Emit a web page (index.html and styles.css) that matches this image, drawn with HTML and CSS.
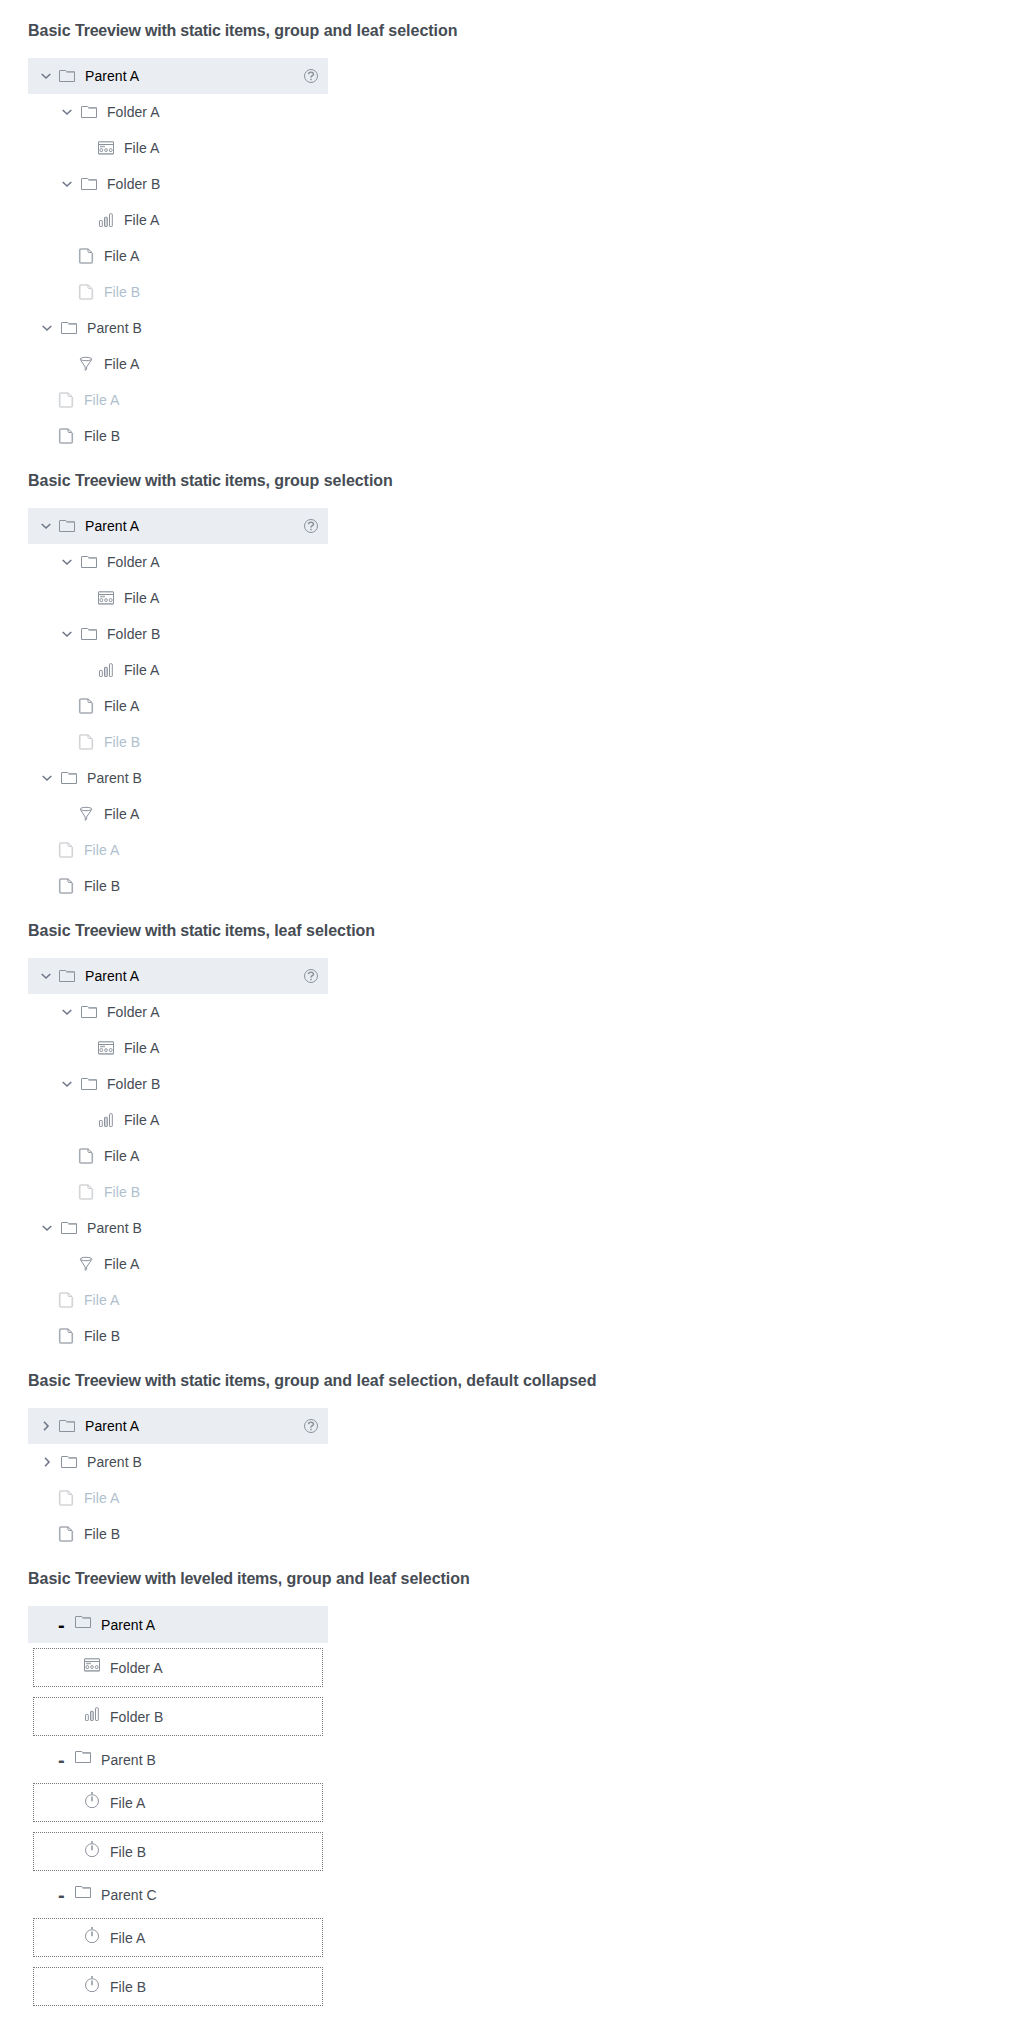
FILE: index.html
```html
<!DOCTYPE html>
<html lang="en">
<head>
<meta charset="utf-8">
<title>Treeview</title>
<link rel="stylesheet" href="styles.css">
</head>
<body>
<svg class="sprite" aria-hidden="true">
  <symbol id="open" viewBox="0 0 16 16"><path class="chevron" d="M3.700 6l4.300 4 4.300-4"/></symbol>
  <symbol id="closed" viewBox="0 0 16 16"><path class="chevron" d="M6 3.700l4 4.300-4 4.300"/></symbol>
  <symbol id="folder" viewBox="0 0 16 16"><path d="M1 2.500H6.500Q7.300 2.500 7.700 3.500H15Q15.500 3.500 15.500 4V13.500H.5V3Q.5 2.500 1 2.500Z"/><path class="soft" d="M7.500 4H15.500"/></symbol>
  <symbol id="file" viewBox="0 0 16 16"><path class="soft" d="M10 1H3Q1.700 1 1.700 2.300V13.700Q1.700 15 3 15H13Q14.300 15 14.300 13.700V5"/><path d="M10 .8L14.300 4.800M10 1.200V3.600Q10 4.400 10.800 4.400H13.700"/></symbol>
  <symbol id="board" viewBox="0 0 16 16"><path d="M.5 2V14M15.500 2V14M.5 4.500H15.500"/><path class="soft" d="M.5 1.800H15.500M.5 13.900H15.500M2 6.500H7"/><rect x="2" y="8.700" width="2.600" height="2.800" rx=".8"/><rect x="6.700" y="8.700" width="2.600" height="2.800" rx="1.200"/><rect x="11.400" y="8.700" width="2.600" height="2.800" rx=".8"/></symbol>
  <symbol id="bars" viewBox="0 0 16 16"><rect x="1.500" y="8.500" width="2.800" height="6" rx=".6"/><rect class="tint" x="6.500" y="5.300" width="2.800" height="9.200" rx=".6"/><rect x="11.500" y="1.800" width="2.800" height="12.700" rx=".6"/></symbol>
  <symbol id="funnel" viewBox="0 0 16 16"><ellipse cx="8" cy="3" rx="5.700" ry="1.700"/><path d="M2.300 3.500L7.200 11V14.300L8.600 13.300V11L13.700 3.500"/></symbol>
  <symbol id="timer" viewBox="0 0 16 16"><circle cx="8" cy="9.200" r="6.500"/><path class="hand" d="M8 0V2.500M8 4.500V9.200"/></symbol>
  <symbol id="help" viewBox="0 0 16 16"><circle cx="8" cy="8" r="6.500"/><path class="question" d="M5.500 6.200Q5.600 4.200 8 4.200T10.500 6.200Q10.500 7.200 9.200 7.800T8 9.600M8 10.800V12.200"/></symbol>
</svg>

<main class="page">
  <section>
    <h4 class="title">Basic <span class="tight">Treeview with static items,</span> group and leaf selection</h4>
    <div class="tree">
      <div class="row group selected"><svg class="caret"><use href="#open"/></svg><svg class="icon"><use href="#folder"/></svg><span>Parent A</span><svg class="icon help"><use href="#help"/></svg></div>
      <div class="row group nested"><svg class="caret"><use href="#open"/></svg><svg class="icon"><use href="#folder"/></svg><span>Folder A</span></div>
      <div class="row leaf level-2"><svg class="icon"><use href="#board"/></svg><span>File A</span></div>
      <div class="row group nested"><svg class="caret"><use href="#open"/></svg><svg class="icon"><use href="#folder"/></svg><span>Folder B</span></div>
      <div class="row leaf level-2"><svg class="icon"><use href="#bars"/></svg><span>File A</span></div>
      <div class="row leaf level-1"><svg class="icon"><use href="#file"/></svg><span>File A</span></div>
      <div class="row leaf level-1 disabled"><svg class="icon"><use href="#file"/></svg><span>File B</span></div>
      <div class="row group"><svg class="caret"><use href="#open"/></svg><svg class="icon"><use href="#folder"/></svg><span>Parent B</span></div>
      <div class="row leaf level-1"><svg class="icon"><use href="#funnel"/></svg><span>File A</span></div>
      <div class="row leaf disabled"><svg class="icon"><use href="#file"/></svg><span>File A</span></div>
      <div class="row leaf"><svg class="icon"><use href="#file"/></svg><span>File B</span></div>
    </div>
  </section>

  <section>
    <h4 class="title">Basic <span class="tight">Treeview with static items,</span> group selection</h4>
    <div class="tree">
      <div class="row group selected"><svg class="caret"><use href="#open"/></svg><svg class="icon"><use href="#folder"/></svg><span>Parent A</span><svg class="icon help"><use href="#help"/></svg></div>
      <div class="row group nested"><svg class="caret"><use href="#open"/></svg><svg class="icon"><use href="#folder"/></svg><span>Folder A</span></div>
      <div class="row leaf level-2"><svg class="icon"><use href="#board"/></svg><span>File A</span></div>
      <div class="row group nested"><svg class="caret"><use href="#open"/></svg><svg class="icon"><use href="#folder"/></svg><span>Folder B</span></div>
      <div class="row leaf level-2"><svg class="icon"><use href="#bars"/></svg><span>File A</span></div>
      <div class="row leaf level-1"><svg class="icon"><use href="#file"/></svg><span>File A</span></div>
      <div class="row leaf level-1 disabled"><svg class="icon"><use href="#file"/></svg><span>File B</span></div>
      <div class="row group"><svg class="caret"><use href="#open"/></svg><svg class="icon"><use href="#folder"/></svg><span>Parent B</span></div>
      <div class="row leaf level-1"><svg class="icon"><use href="#funnel"/></svg><span>File A</span></div>
      <div class="row leaf disabled"><svg class="icon"><use href="#file"/></svg><span>File A</span></div>
      <div class="row leaf"><svg class="icon"><use href="#file"/></svg><span>File B</span></div>
    </div>
  </section>

  <section>
    <h4 class="title">Basic <span class="tight">Treeview with static items,</span> leaf selection</h4>
    <div class="tree">
      <div class="row group selected"><svg class="caret"><use href="#open"/></svg><svg class="icon"><use href="#folder"/></svg><span>Parent A</span><svg class="icon help"><use href="#help"/></svg></div>
      <div class="row group nested"><svg class="caret"><use href="#open"/></svg><svg class="icon"><use href="#folder"/></svg><span>Folder A</span></div>
      <div class="row leaf level-2"><svg class="icon"><use href="#board"/></svg><span>File A</span></div>
      <div class="row group nested"><svg class="caret"><use href="#open"/></svg><svg class="icon"><use href="#folder"/></svg><span>Folder B</span></div>
      <div class="row leaf level-2"><svg class="icon"><use href="#bars"/></svg><span>File A</span></div>
      <div class="row leaf level-1"><svg class="icon"><use href="#file"/></svg><span>File A</span></div>
      <div class="row leaf level-1 disabled"><svg class="icon"><use href="#file"/></svg><span>File B</span></div>
      <div class="row group"><svg class="caret"><use href="#open"/></svg><svg class="icon"><use href="#folder"/></svg><span>Parent B</span></div>
      <div class="row leaf level-1"><svg class="icon"><use href="#funnel"/></svg><span>File A</span></div>
      <div class="row leaf disabled"><svg class="icon"><use href="#file"/></svg><span>File A</span></div>
      <div class="row leaf"><svg class="icon"><use href="#file"/></svg><span>File B</span></div>
    </div>
  </section>

  <section>
    <h4 class="title">Basic <span class="tight">Treeview with static items,</span> group and leaf selection, default collapsed</h4>
    <div class="tree">
      <div class="row group selected"><svg class="caret"><use href="#closed"/></svg><svg class="icon"><use href="#folder"/></svg><span>Parent A</span><svg class="icon help"><use href="#help"/></svg></div>
      <div class="row group"><svg class="caret"><use href="#closed"/></svg><svg class="icon"><use href="#folder"/></svg><span>Parent B</span></div>
      <div class="row leaf disabled"><svg class="icon"><use href="#file"/></svg><span>File A</span></div>
      <div class="row leaf"><svg class="icon"><use href="#file"/></svg><span>File B</span></div>
    </div>
  </section>

  <section>
    <h4 class="title">Basic <span class="tight">Treeview with leveled items,</span> group and leaf selection</h4>
    <div class="tree">
      <div class="branch selected"><b class="sign">-</b><svg class="icon"><use href="#folder"/></svg><span>Parent A</span></div>
      <div class="box"><svg class="icon"><use href="#board"/></svg><span>Folder A</span></div>
      <div class="box"><svg class="icon"><use href="#bars"/></svg><span>Folder B</span></div>
      <div class="branch"><b class="sign">-</b><svg class="icon"><use href="#folder"/></svg><span>Parent B</span></div>
      <div class="box"><svg class="icon"><use href="#timer"/></svg><span>File A</span></div>
      <div class="box"><svg class="icon"><use href="#timer"/></svg><span>File B</span></div>
      <div class="branch"><b class="sign">-</b><svg class="icon"><use href="#folder"/></svg><span>Parent C</span></div>
      <div class="box"><svg class="icon"><use href="#timer"/></svg><span>File A</span></div>
      <div class="box"><svg class="icon"><use href="#timer"/></svg><span>File B</span></div>
    </div>
  </section>
</main>
</body>
</html>
```
FILE: styles.css
```css
* {
  box-sizing: border-box;
}

body {
  margin: 0;
  background: #fff;
  color: #464c54;
  font: 14px/16px "Liberation Sans", Arial, sans-serif;
}

.sprite {
  display: none;
}

.page {
  padding: 4px 28px 20px;
}

.title {
  height: 54px;
  margin: 0;
  padding-top: 17px;
  font-size: 16px;
  line-height: 19px;
  letter-spacing: -0.03px;
  white-space: nowrap;
}

.tight {
  letter-spacing: -0.23px;
}

.tree {
  width: 300px;
  letter-spacing: 0.06px;
}

.row {
  display: flex;
  align-items: center;
  height: 36px;
  padding-right: 9px;
}

.group {
  padding-left: 11px;
}

.nested {
  padding-left: 31px;
}

.leaf {
  padding-left: 30px;
}

.level-1 {
  padding-left: 50px;
}

.level-2 {
  padding-left: 70px;
}

.selected {
  background: #eaedf2;
  color: #000;
}

.group.selected {
  padding-left: 10px;
}

.caret,
.icon {
  flex: none;
  width: 16px;
  height: 16px;
  fill: none;
  stroke: #8c929b;
}

.caret {
  margin-right: 6px;
}

.selected .caret {
  margin-right: 5px;
}

.chevron {
  stroke: #6f7788;
  stroke-width: 1.6;
}

.soft {
  stroke: #a6acb3;
  stroke-width: 1.6;
}

.tint {
  fill: #d5d8dc;
}

.hand {
  stroke: #a9aeb5;
  stroke-width: 2;
}

.question {
  stroke-width: 1.5;
}

.icon {
  margin-right: 10px;
}

.help {
  margin: 0 0 0 auto;
}

.disabled {
  color: #afbfcd;
}

.disabled .icon {
  opacity: 0.5;
}

.branch {
  display: flex;
  align-items: flex-start;
  height: 37px;
  padding: 8px 0 0 30px;
}

.branch span,
.box span {
  margin-top: 3px;
}

.sign {
  width: 17px;
  padding-top: 3px;
  font-size: 20px;
}

.box {
  display: flex;
  align-items: flex-start;
  height: 39px;
  margin: 5px 5px 10px;
  padding: 8px 0 0 50px;
  border: 1px dotted #777;
}

.box + .box {
  margin-bottom: 5px;
}
```
